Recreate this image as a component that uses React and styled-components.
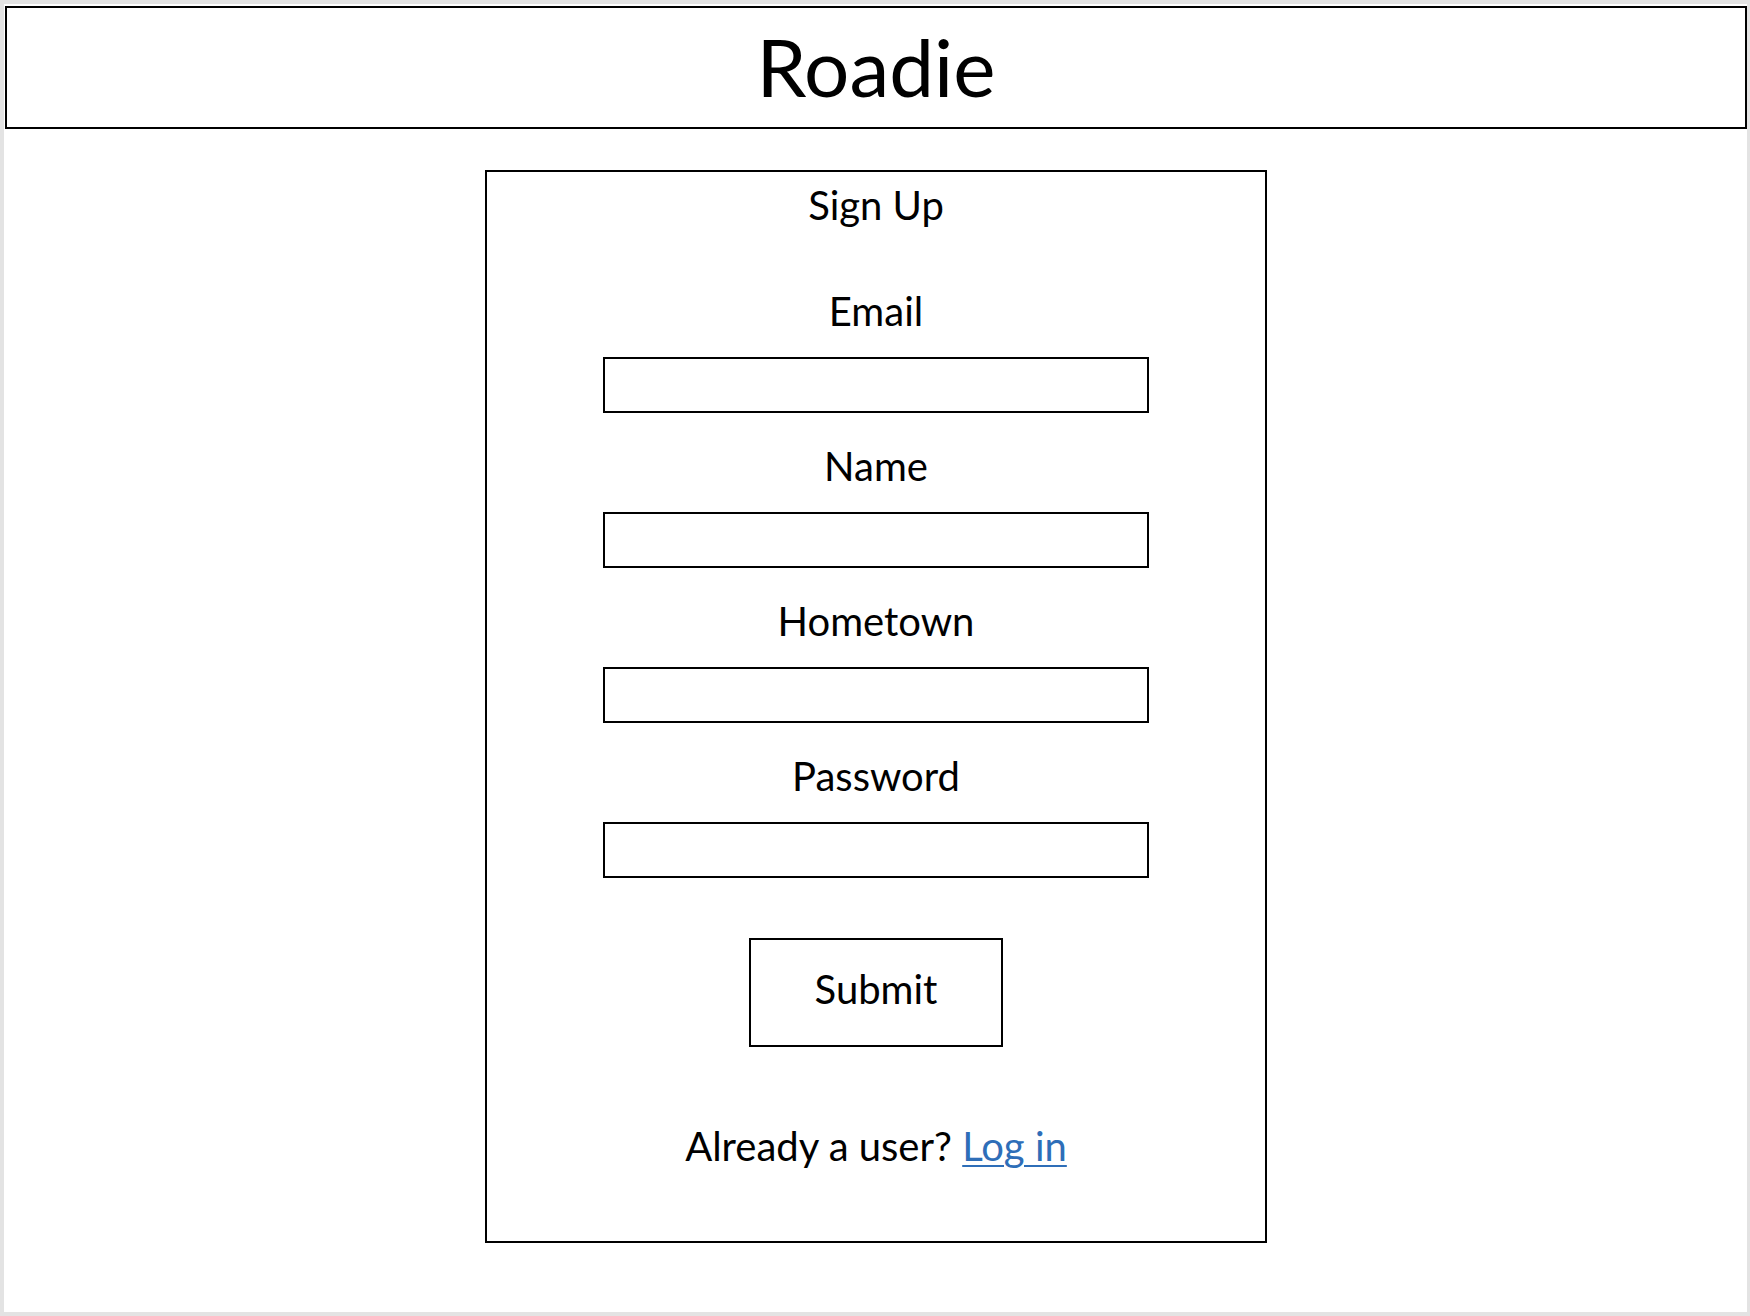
import React from "react";
import styled, { createGlobalStyle } from "styled-components";

const GlobalStyle = createGlobalStyle`
  html, body {
    margin: 0;
    padding: 0;
    background: #e3e3e3;
  }
  * { box-sizing: border-box; }
`;

const Sheet = styled.div`
  margin: 4px 3px 0 4px;
  height: 1308px;
  background: #ffffff;
  padding: 2px 0 0 1px;
  font-family: Lato, "Open Sans", sans-serif;
  color: #000;
`;

const Header = styled.header`
  height: 123px;
  border: 2px solid #000;
  display: flex;
  align-items: center;
  justify-content: center;
  padding-bottom: 4px;
`;

const Title = styled.h1`
  margin: 0;
  font-size: 80px;
  font-weight: 400;
  line-height: 1.2;
`;

const Card = styled.main`
  width: 782px;
  height: 1073px;
  margin: 41px auto 0;
  border: 2px solid #000;
  display: flex;
  flex-direction: column;
  align-items: center;
  padding-top: 9px;
`;

const CardTitle = styled.h2`
  margin: 0 0 58px;
  font-size: 40px;
  font-weight: 400;
  line-height: 48px;
`;

const Fields = styled.div`
  display: flex;
  flex-direction: column;
  align-items: center;
  gap: 29px;
`;

const Field = styled.label`
  display: flex;
  flex-direction: column;
  align-items: center;
  gap: 22px;
`;

const LabelText = styled.span`
  font-size: 40px;
  line-height: 48px;
`;

const TextInput = styled.input`
  width: 546px;
  height: 56px;
  border: 2px solid #000;
  border-radius: 0;
  background: #fff;
  outline: none;
  padding: 0 12px;
  font: inherit;
  font-size: 28px;
`;

const SubmitButton = styled.button`
  margin-top: 60px;
  width: 254px;
  height: 109px;
  border: 2px solid #000;
  border-radius: 0;
  background: #fff;
  font-family: Lato, "Open Sans", sans-serif;
  font-size: 40px;
  line-height: 48px;
  color: #000;
  padding: 0 0 8px;
  cursor: pointer;
`;

const Footer = styled.p`
  margin: 75px 0 0;
  font-size: 40px;
  line-height: 48px;
`;

const LoginLink = styled.a`
  color: #2e6eb8;
  text-decoration: underline;
  text-decoration-thickness: 2px;
  text-underline-offset: 4px;
`;

const fields = [
  { label: "Email", type: "email" },
  { label: "Name", type: "text" },
  { label: "Hometown", type: "text" },
  { label: "Password", type: "password" },
];

export default function App() {
  return (
    <>
      <GlobalStyle />
      <Sheet>
        <Header>
          <Title>Roadie</Title>
        </Header>
        <Card>
          <CardTitle>Sign Up</CardTitle>
          <Fields>
            {fields.map((f) => (
              <Field key={f.label}>
                <LabelText>{f.label}</LabelText>
                <TextInput type={f.type} />
              </Field>
            ))}
          </Fields>
          <SubmitButton type="button">Submit</SubmitButton>
          <Footer>
            Already a user? <LoginLink href="#">Log in</LoginLink>
          </Footer>
        </Card>
      </Sheet>
    </>
  );
}
